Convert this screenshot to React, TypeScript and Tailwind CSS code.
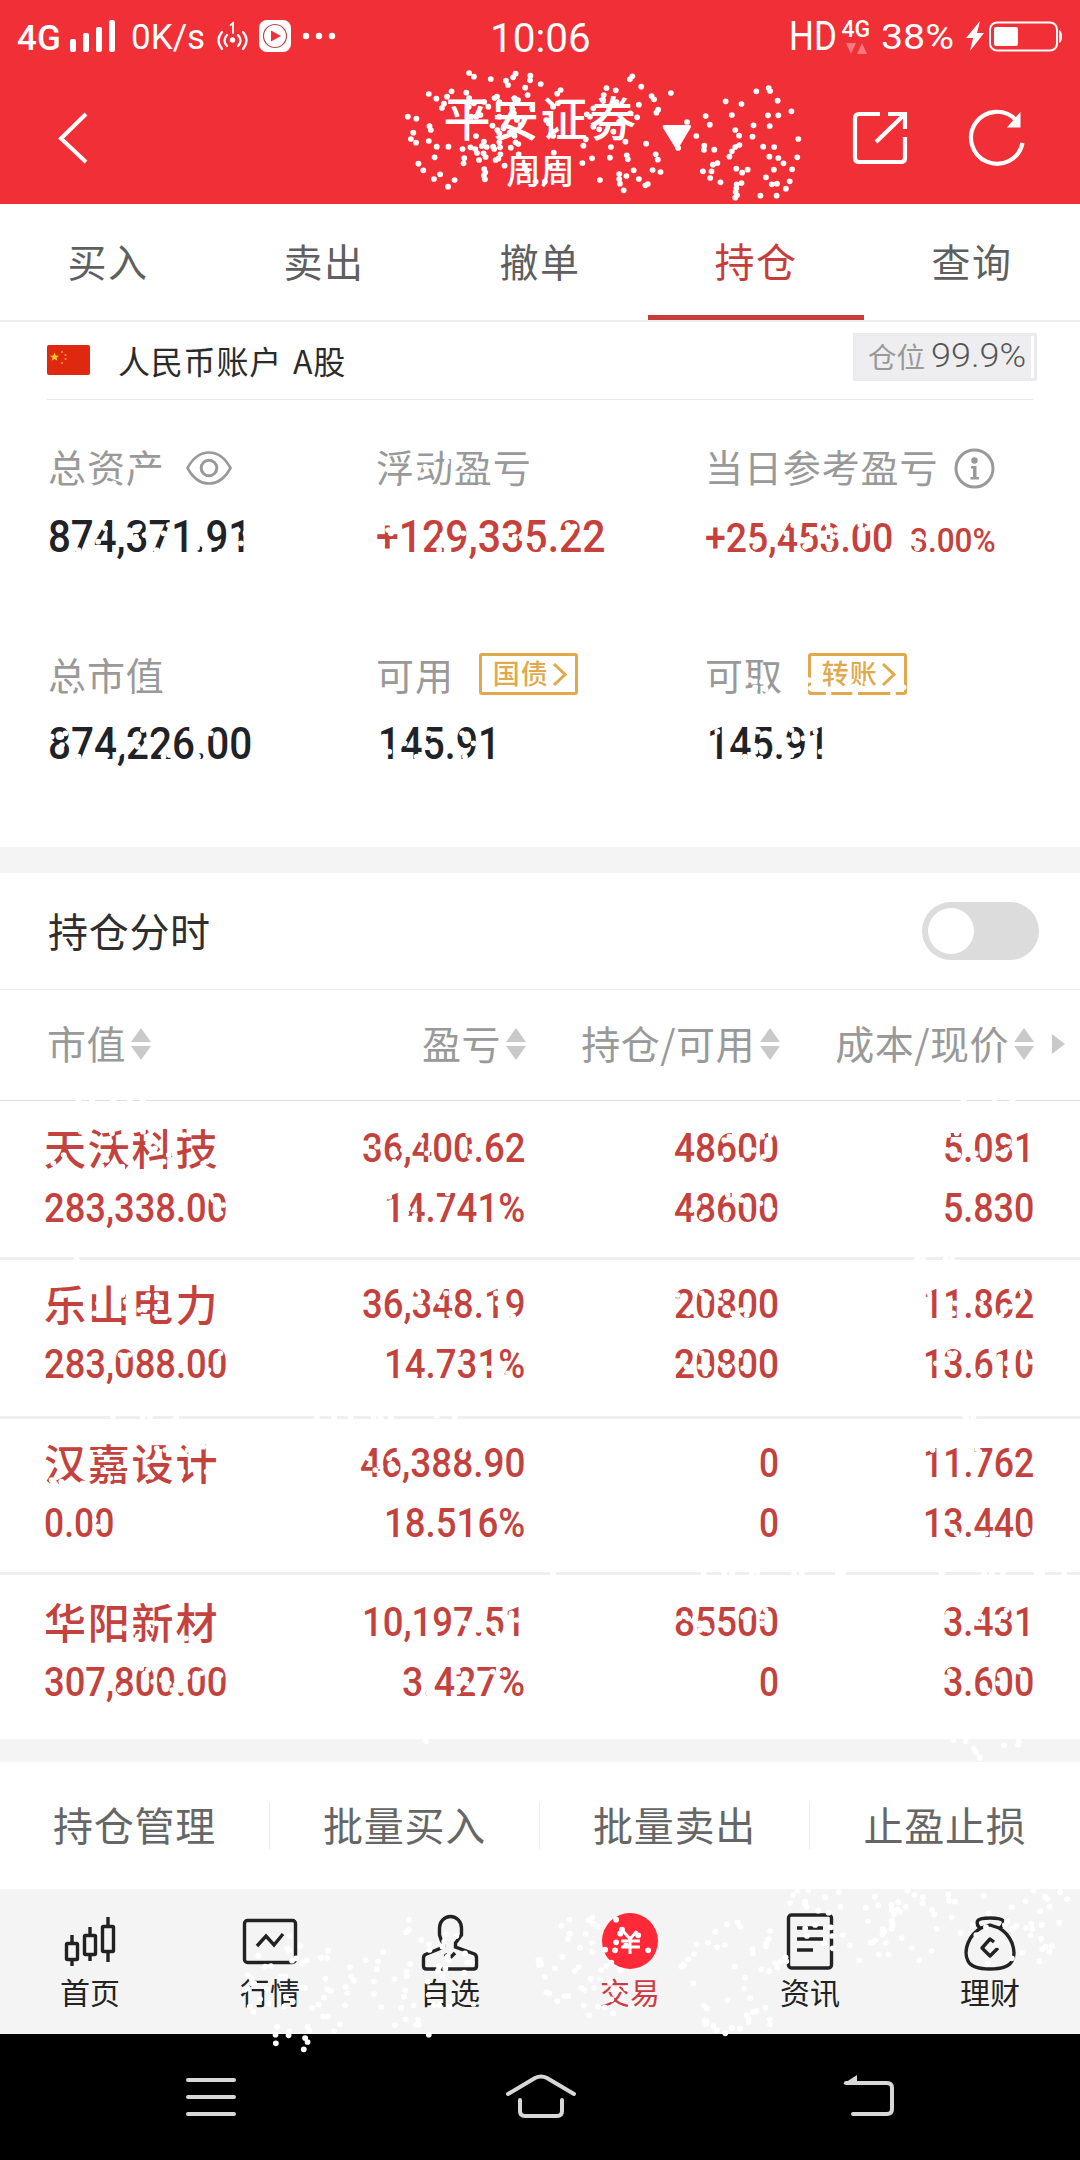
import { useLayoutEffect, useRef, useState } from "react";
import type { ReactNode } from "react";

/* Digits squeezed horizontally to a fixed width, like a condensed DIN face. */
function Fit({ w, className = "", children }: { w: number; className?: string; children: ReactNode }) {
  const ref = useRef<HTMLSpanElement>(null);
  const [scale, setScale] = useState(1);
  useLayoutEffect(() => {
    if (ref.current) setScale(w / ref.current.offsetWidth);
  }, [w]);
  return (
    <span className={`inline-flex shrink-0 whitespace-nowrap font-[Roboto,sans-serif] ${className}`} style={{ width: w }}>
      <span ref={ref} className="origin-left" style={{ transform: `scaleX(${scale})` }}>
        {children}
      </span>
    </span>
  );
}

function StatusBar() {
  return (
    <div className="flex h-[72px] items-center text-white">
      <div className="flex w-[492px] items-center pl-[17px]">
        <Fit w={44} className="mt-[6px] text-[35px] leading-[40px] font-medium">4G</Fit>
        <svg className="ml-[9px] h-[36px] w-[46px]" viewBox="0 0 46 36" fill="#fff">
          <rect x="0" y="21" width="6" height="13" rx="2" />
          <rect x="13" y="15" width="6" height="19" rx="2" />
          <rect x="26" y="9" width="6" height="25" rx="2" />
          <rect x="39" y="2" width="6" height="32" rx="2" />
        </svg>
        <Fit w={74} className="ml-[15px] mt-[3px] text-[35px] leading-[40px]">0K/s</Fit>
        <svg className="ml-[11px] h-[36px] w-[34px]" viewBox="0 0 34 36" fill="none" stroke="#fff" strokeWidth="2.2" strokeLinecap="round">
          <path d="M6 14q-7 8 0 17M11 17q-5 5.500 0 11M27 14q7 8 0 17M22 17q5 5.500 0 11" />
          <path d="M14.500 7l2.500-2v10" strokeWidth="1.800" />
          <circle cx="16.500" cy="22" r="2.700" fill="#fff" stroke="none" />
        </svg>
        <svg className="ml-[9px] h-[32px] w-[32px]" viewBox="0 0 32 32">
          <rect width="32" height="32" rx="8" fill="#fff" />
          <circle cx="16" cy="16" r="11.500" fill="none" stroke="#b84a4c" strokeWidth="1.200" />
          <path d="M12 10.500v11l10-5.500z" fill="#ef3038" />
        </svg>
        <svg className="ml-[11px] h-[8px] w-[34px]" viewBox="0 0 34 8" fill="#fff">
          <circle cx="4" cy="4" r="3.200" />
          <circle cx="17" cy="4" r="3.200" />
          <circle cx="30" cy="4" r="3.200" />
        </svg>
      </div>
      <Fit w={101} className="mt-[5px] -ml-[2px] text-[40px] leading-[44px]">10:06</Fit>
      <Fit w={48} className="ml-[198px] mt-px text-[40px] leading-[44px]">HD</Fit>
      <div className="ml-[4px] mt-px flex w-[30px] flex-col items-center">
        <Fit w={29} className="text-[23px] leading-[22px] font-medium">4G</Fit>
        <svg className="mt-[2px] h-[11px] w-[21px]" viewBox="0 0 21 11" fill="#f9787d">
          <path d="M0 0h10L5 11zM11 11h10L16 0z" />
        </svg>
      </div>
      <Fit w={73} className="ml-[10px] mt-[4px] text-[35px] leading-[40px]">38%</Fit>
      <svg className="ml-[12px] h-[30px] w-[18px]" viewBox="0 0 18 30" fill="#fff">
        <path d="M14 0L0 17h7L4 30 18 12h-7z" />
      </svg>
      <svg className="ml-[5px] h-[31px] w-[74px]" viewBox="0 0 74 31">
        <rect x="1" y="1.500" width="67" height="28" rx="7" fill="none" stroke="#fff" strokeWidth="2" />
        <rect x="5" y="6" width="24" height="19" rx="2" fill="#fff" />
        <path d="M70 9q3 1 3 6.500T70 22z" fill="#fff" />
      </svg>
    </div>
  );
}

function TitleBar() {
  return (
    <div className="flex h-[132px] items-start text-white">
      <svg className="ml-[58px] mt-[40px] h-[52px] w-[30px] shrink-0" viewBox="0 0 30 52" fill="none" stroke="#fff" strokeWidth="4">
        <path d="M28 2L3 26.500L28 50" />
      </svg>
      <div className="ml-[355px] mt-[21px] flex w-[195px] flex-col items-center font-[Roboto,'Noto_Sans_CJK_SC',sans-serif]">
        <div className="whitespace-nowrap text-[47px] leading-[54px] font-medium tracking-[1.5px]">平安证券</div>
        <div className="mt-[3px] whitespace-nowrap text-[34px] leading-[44px] font-medium">周周</div>
      </div>
      <svg className="ml-[24px] mt-[53px] h-[25px] w-[30px]" viewBox="0 0 30 25" fill="#fff">
        <path d="M2 0h25q3 0 1.500 3L16 24q-1 1-2 0L1 3Q0 0 2 0z" />
      </svg>
      <svg className="ml-[160px] mt-[39px] h-[54px] w-[56px]" viewBox="0 0 56 54" fill="none" stroke="#fff" strokeWidth="4.200">
        <path d="M28 3H7q-4 0-4 4v40q0 4 4 4h42q4 0 4-4V26" />
        <path d="M36 3h17v15M53 3L24 31" />
      </svg>
      <svg className="ml-[60px] mt-[35px] h-[60px] w-[58px]" viewBox="0 0 58 60" fill="none" stroke="#fff" strokeWidth="4.200">
        <path d="M54.500 36A26 26 0 1 1 48 13" />
        <path d="M51.500 7.500v12H41z" fill="#fff" strokeWidth="2" />
      </svg>
    </div>
  );
}

const TABS = ["买入", "卖出", "撤单", "持仓", "查询"];

function Tabs() {
  return (
    <div className="grid h-[118px] grid-cols-5 border-b-2 border-[#ececec]">
      {TABS.map((t) => (
        <div
          key={t}
          className={
            t === "持仓"
              ? "border-b-[5px] border-[#c93c3c] pt-[27px] text-center text-[40px] leading-[58px] tracking-[1.500px] text-[#c93c3c]"
              : "pt-[27px] text-center text-[39px] leading-[58px] tracking-[1.500px] text-[#5f5f5f]"
          }
        >
          {t}
        </div>
      ))}
    </div>
  );
}

function AccountRow() {
  return (
    <div className="mx-[47px] flex h-[78px] items-start border-b border-[#e9e9e9]">
      <svg className="mt-[23px] h-[30px] w-[43px]" viewBox="0 0 43 30">
        <rect width="43" height="30" rx="2" fill="#de2910" />
        <path d="M7.500 7.500l1.300 3 3.200.2-2.500 2 .9 3.100-2.900-1.800-2.800 1.800.8-3.100-2.500-2 3.300-.2z" fill="#ffc72c" />
        <g fill="#f39a2b">
          <circle cx="15" cy="7" r="1.100" />
          <circle cx="18.500" cy="10" r="1.100" />
          <circle cx="18.500" cy="14" r="1.100" />
          <circle cx="15" cy="18" r="1.100" />
        </g>
      </svg>
      <div className="ml-[28px] mt-[14px] flex-1 text-[32px] leading-[48px] tracking-[0.800px] text-[#2b2b2b] [word-spacing:3px]">人民币账户 A股</div>
      <div className="-mr-[4px] mt-[11px] flex h-[48px] w-[184px] items-center border-[3px] border-[#ebebee] bg-[#eeeef0] pl-[12px] pb-px">
        <span className="-mt-[2px] text-[28.500px] leading-[40px] text-[#999]">仓位</span>
        <Fit w={95} className="ml-[6px] -mt-px text-[33px] leading-[40px] font-light text-[#555]">99.9%</Fit>
        <span className="ml-auto h-[42px] w-[3px] bg-white" />
      </div>
    </div>
  );
}

function Pill({ children }: { children: ReactNode }) {
  return (
    <span className="ml-[25px] flex h-[42px] w-[99px] items-center rounded-[3px] border-[3px] border-[#e0a94e] pl-[11px] text-[27px] leading-[34px] font-medium text-[#e0a94e]">
      <span className="-mt-[2px]">{children}</span>
      <svg className="ml-[3px] h-[25px] w-[15px]" viewBox="0 0 15 25" fill="none" stroke="#e0a94e" strokeWidth="3">
        <path d="M2 2l11 10.500L2 23" />
      </svg>
    </span>
  );
}

const labelCls = "flex h-[44px] items-center whitespace-nowrap text-[38px] leading-[44px] tracking-[0.900px] text-[#999]";

function Assets() {
  return (
    <div className="grid h-[447px] grid-cols-[328px_329px_1fr] grid-rows-[208px_1fr] pl-[48px] pt-[46px]">
      <div>
        <div className={labelCls}>
          <span className="-mt-[4px]">总资产</span>
          <svg className="ml-[21px] h-[34px] w-[46px]" viewBox="0 0 46 34" fill="none" stroke="#999" strokeWidth="2.600">
            <path d="M1.500 17Q10 1.500 23 1.500T44.500 17Q36 32.500 23 32.500T1.500 17z" />
            <circle cx="23" cy="17" r="7.800" strokeWidth="3" />
          </svg>
        </div>
        <Fit w={203} className="mt-[22px] text-[44px] leading-[50px] font-medium text-[#1f2227]">874,371.91</Fit>
      </div>
      <div>
        <div className={labelCls}><span className="-mt-[4px]">浮动盈亏</span></div>
        <Fit w={230} className="mt-[22px] text-[44px] leading-[50px] font-medium text-[#c6403c]">+129,335.22</Fit>
      </div>
      <div>
        <div className={labelCls}>
          <span className="-mt-[4px]">当日参考盈亏</span>
          <svg className="ml-[16px] h-[41px] w-[41px]" viewBox="0 0 41 41">
            <circle cx="20.500" cy="20.500" r="18.500" fill="none" stroke="#999" strokeWidth="3" />
            <circle cx="20.500" cy="12.500" r="3.200" fill="#999" />
            <path d="M17 18h5.500v11H25v2.500h-8.500V29H19v-8.500h-2z" fill="#999" />
          </svg>
        </div>
        <div className="mt-[24px] flex items-baseline text-[#c6403c]">
          <Fit w={188} className="text-[40px] leading-[50px] font-medium">+25,453.00</Fit>
          <Fit w={86} className="ml-[17px] text-[33px] leading-[40px] font-medium">3.00%</Fit>
        </div>
      </div>
      <div>
        <div className={labelCls}><span className="-mt-[4px]">总市值</span></div>
        <Fit w={204} className="mt-[21px] text-[44px] leading-[50px] font-medium text-[#1f2227]">874,226.00</Fit>
      </div>
      <div>
        <div className={labelCls}><span className="-mt-[4px]">可用</span><span className="-mt-[4px]"><Pill>国债</Pill></span></div>
        <Fit w={122} className="ml-[2px] mt-[21px] text-[44px] leading-[50px] font-medium text-[#1f2227]">145.91</Fit>
      </div>
      <div>
        <div className={labelCls}><span className="-mt-[4px]">可取</span><span className="-mt-[4px]"><Pill>转账</Pill></span></div>
        <Fit w={122} className="ml-[2px] mt-[21px] text-[44px] leading-[50px] font-medium text-[#1f2227]">145.91</Fit>
      </div>
    </div>
  );
}

function SortHead({ children }: { children: ReactNode }) {
  return (
    <div className="flex items-center justify-end whitespace-nowrap">
      <span className="-mt-[4px]">{children}</span>
      <svg className="ml-[5px] h-[32px] w-[20px] shrink-0" viewBox="0 0 20 32" fill="#c9c9c9">
        <path d="M0 14L10 0l10 14zM0 18h20L10 32z" />
      </svg>
    </div>
  );
}

type Cell = [string, number];
type Row = { name: string; value: Cell; cells: [Cell, Cell][]; height: string; top: string };

const ROWS: Row[] = [
  {
    name: "天沃科技", value: ["283,338.00", 183], height: "h-[159px] border-b-[3px]", top: "pt-[17px]",
    cells: [[["36,400.62", 163], ["14.741%", 141]], [["48600", 105], ["48600", 105]], [["5.081", 91], ["5.830", 91]]],
  },
  {
    name: "乐山电力", value: ["283,088.00", 183], height: "h-[159px] border-b-[3px]", top: "pt-[14px]",
    cells: [[["36,348.19", 163], ["14.731%", 141]], [["20800", 105], ["20800", 105]], [["11.862", 111], ["13.610", 111]]],
  },
  {
    name: "汉嘉设计", value: ["0.00", 70], height: "h-[156px] border-b-[3px]", top: "pt-[14px]",
    cells: [[["46,388.90", 165], ["18.516%", 141]], [["0", 20], ["0", 20]], [["11.762", 111], ["13.440", 111]]],
  },
  {
    name: "华阳新材", value: ["307,800.00", 183], height: "h-[164px]", top: "pt-[17px]",
    cells: [[["10,197.51", 163], ["3.427%", 123]], [["85500", 105], ["0", 20]], [["3.431", 91], ["3.600", 91]]],
  },
];

const COLS = "grid grid-cols-[200px_281px_254px_255px_1fr] pl-[44px]";

function Holdings() {
  return (
    <>
      <div className="flex h-[117px] items-center border-b border-[#ececec] pl-[48px] pr-[41px]">
        <span className="flex-1 -mt-[2px] text-[40px] leading-[50px] tracking-[0.700px] text-[#2e2e2e]">持仓分时</span>
        <span className="flex h-[58px] w-[117px] items-center rounded-full bg-[#dcdcdc] pl-[6px]">
          <span className="h-[46px] w-[46px] rounded-full bg-white" />
        </span>
      </div>
      <div className="grid h-[111px] grid-cols-[103px_375px_254px_254px_1fr] items-center border-b border-[#dfdfdf] pb-[3px] pl-[48px] text-[39px] leading-[50px] tracking-[0.500px] text-[#999]">
        <SortHead>市值</SortHead>
        <SortHead>盈亏</SortHead>
        <SortHead>持仓/可用</SortHead>
        <SortHead>成本/现价</SortHead>
        <svg className="ml-[18px] h-[20px] w-[13px]" viewBox="0 0 13 20" fill="#c9c9c9">
          <path d="M0 0l13 10L0 20z" />
        </svg>
      </div>
      {ROWS.map((r) => (
        <div key={r.name} className={`${COLS} ${r.height} border-[#efefef] text-[40.500px] leading-[60px] font-medium text-[#c4423e]`}>
          <div className={`flex flex-col ${r.top}`}>
            <span className="flex h-[60px] items-end whitespace-nowrap text-[42px] leading-[62px] tracking-[1.800px]">{r.name}</span>
            <Fit w={r.value[1]}>{r.value[0]}</Fit>
          </div>
          {r.cells.map(([a, b], i) => (
            <div key={i} className={`flex flex-col items-end ${r.top}`}>
              <Fit w={a[1]}>{a[0]}</Fit>
              <Fit w={b[1]}>{b[0]}</Fit>
            </div>
          ))}
        </div>
      ))}
    </>
  );
}

function Actions() {
  return (
    <div className="flex h-[127px] items-center">
      {["持仓管理", "批量买入", "批量卖出", "止盈止损"].map((t, i) => (
        <div key={t} className={`flex h-[47px] w-[270px] items-center justify-center text-[40px] leading-[47px] tracking-[0.700px] text-[#666] ${i < 3 ? "border-r border-[#ececec]" : ""}`}>
          <span className="-mt-[2px]">{t}</span>
        </div>
      ))}
    </div>
  );
}

const ICONS: { label: string; icon: ReactNode }[] = [
  {
    label: "首页",
    icon: (
      <g strokeWidth="3.400">
        <rect x="6.500" y="30.500" width="11" height="16" rx="1" />
        <rect x="24.500" y="22.500" width="11" height="19" rx="1" />
        <rect x="42.500" y="13.500" width="11" height="25" rx="1" />
        <path d="M12 22v8M12 47v6M30 14v8M30 42v6M48 4v9M48 39v10" />
      </g>
    ),
  },
  {
    label: "行情",
    icon: (
      <g strokeWidth="3.400">
        <rect x="4.500" y="7.500" width="51" height="42" rx="3" />
        <path d="M17 33l9-10 8 9 9-11" />
      </g>
    ),
  },
  {
    label: "自选",
    icon: (
      <g strokeWidth="3.400">
        <path d="M23 28l-2-6v-7a11 11.500 0 0 1 22 0v7l-6 8v4l19 7q2 1 2 4v8q0 3-3 3H8q-3 0-3-3v-8q0-3 3-4l17-7v-4z" transform="translate(-1.500 0)" />
        <path d="M25 41l4 5 6-6" />
      </g>
    ),
  },
  {
    label: "交易",
    icon: (
      <g>
        <circle cx="30" cy="28" r="28" fill="#ff2938" stroke="none" />
        <path d="M23 18l7 8 7-8M21 28h19M21 34h19M30 26v15" stroke="#fff" strokeWidth="3" />
      </g>
    ),
  },
  {
    label: "资讯",
    icon: (
      <g strokeWidth="3.400">
        <rect x="8.500" y="2" width="43" height="53" rx="3" />
        <path d="M17 15h26M17 26h26M17 37h16" />
      </g>
    ),
  },
  {
    label: "理财",
    icon: (
      <g strokeWidth="3.400" strokeLinejoin="round">
        <path d="M21 16q-5-4-3.500-8Q19 5 30 5t13.500 3Q44 12 39 16" />
        <path d="M21 16l9-3 9 3q9 5 13 15 4 11 0 18-4 8-22 8T8 49q-4-8 0-18 4-10 13-15z" transform="translate(0 -1)" />
        <path d="M34 29l-4-3-8 9 8 8 8-8" />
      </g>
    ),
  },
];

function BottomNav() {
  return (
    <div className="grid h-[145px] grid-cols-6 bg-[#f4f4f4]">
      {ICONS.map(({ label, icon }) => (
        <div key={label} className="flex flex-col items-center pt-[24px]">
          <svg className="h-[60px] w-[60px] overflow-visible" viewBox="0 0 60 60" fill="none" stroke="#222">
            {icon}
          </svg>
          <span className={`-mt-px text-[30px] leading-[38px] ${label === "交易" ? "text-[#cc3a42]" : "text-[#222]"}`}>{label}</span>
        </div>
      ))}
    </div>
  );
}

function SystemNav() {
  return (
    <div className="flex h-[126px] items-start bg-black pt-[40px]">
      <svg className="ml-[186px] h-[46px] w-[50px]" viewBox="0 0 50 46" fill="none" stroke="#d8d8d8" strokeWidth="4" strokeLinecap="round">
        <path d="M2 6h46M2 23h46M2 40h46" />
      </svg>
      <svg className="ml-[269px] h-[46px] w-[72px]" viewBox="0 0 72 46" fill="none" stroke="#d8d8d8" strokeWidth="4" strokeLinecap="round">
        <path d="M3 20L30 4q6-3 12 0l27 16M15 26v11q0 5 5 5h32q5 0 5-5V26" />
      </svg>
      <svg className="ml-[265px] h-[46px] w-[54px]" viewBox="0 0 54 46" fill="none" stroke="#d8d8d8" strokeWidth="4" strokeLinecap="round">
        <path d="M4 9h41q5 0 5 5v21q0 5-5 5H11" />
        <path d="M1 10L15 1v9z" fill="#d8d8d8" stroke="none" />
      </svg>
    </div>
  );
}

/* White speckle scattered over the page; each group is in its own grid of units. */
const SPECKS: { at: string; pts: string }[] = [
  {
    at: "translate(0 0) scale(.3444 .3333)",
    pts: "1362,219 1376,230 1425,237 1469,242 1475,255 1490,232 1497,221 1540,227 1539,241 1525,263 1532,285 1311,274 1354,278 1245,282 1267,296 1298,290 1289,311 1283,324 1184,350 1209,356 1247,378 1251,390 1200,398 1193,417 1208,428 1245,423 1268,440 1302,440 1262,472 1215,491 1229,511 1260,537 1278,523 1301,560 1320,540 1343,447 1348,474 1346,490 1366,442 1380,447 1385,459 1405,425 1399,438 1413,441 1404,460 1410,471 1391,480 1382,408 1406,507 1409,517 1405,527 1408,538 1430,377 1432,440 1435,447 1450,427 1452,442 1453,463 1439,480 1447,476 1465,497 1483,443 1497,427 1505,432 1506,463 1524,500 1362,294 1376,310 1406,306 1418,320 1361,320 1368,350 1383,350 1395,345 1436,294 1443,290 1450,306 1494,294 1504,300 1487,324 1492,340 1501,360 1450,350 1444,390 1450,400 1462,385 1480,398 1494,408 1512,375 1545,325 1530,512 1555,545",
  },
  {
    at: "translate(540 0) scale(.3444 .3333)",
    pts: "2,252 268,229 261,238 294,260 193,264 220,271 60,270 50,281 185,285 183,300 324,288 331,298 380,279 287,314 343,329 338,338 222,306 200,320 155,325 136,343 145,350 155,380 172,388 213,395 282,352 262,340 230,365 38,320 52,310 25,370 35,395 38,408 18,360 133,418 126,437 206,441 248,425 308,431 203,473 151,475 123,489 252,466 255,478 336,463 342,479 272,511 327,510 350,516 174,540 230,522 230,537 232,551 251,528 243,571 287,537 306,556 313,552 40,458 28,500 14,545 427,366 454,408 481,348 493,374 539,304 585,312 557,345 628,274 664,264 668,273 690,302 662,346 692,346 730,334 620,376 667,378 567,390 578,407 617,410 750,417 477,437 476,450 506,449 579,435 567,441 557,454 550,470 648,440 680,441 666,470 692,474 747,472 707,490 502,494 515,489 473,514 498,514 494,534 524,547 570,506 587,518 603,509 679,509 732,508 656,532 725,544 585,549 571,553 570,565 568,576 572,586 567,593 673,553 688,551 714,566 640,587 687,587 401,444",
  },
  {
    at: "translate(0 200) scale(.3444 .3333)",
    pts: "263,858 330,850 385,800 1145,855 1235,800 1225,825 1265,860 1260,775 1297,785 1325,820 1355,830 1340,790 1395,860 215,990 228,1050 285,1025 305,985 375,990 405,980 395,1010 420,1005 300,1045 475,1000 490,975 455,1050 572,1043 595,1050 628,1000 640,1055 690,990 700,1030 713,1000 1127,990 1135,1000 1110,1030 1262,980 1285,1005 1275,1050 1345,1000 1370,1025 1495,1010 1515,1015 1555,1040",
  },
  {
    at: "translate(540 200) scale(.3444 .3333)",
    pts: "80,975 100,980 10,1050 655,975 650,990 625,1040 715,1000 735,975 750,985 770,1040 760,1020 790,1000 800,1055 835,975 825,1010 850,1010 860,990 875,1020 840,1045 930,975 950,985 1085,1030 1095,1045 1107,1010 1010,1055",
  },
  {
    at: "translate(0 600) scale(.3444 .3333)",
    pts: "375,270 415,255 205,278 1225,225 1245,262 1275,280 150,410 178,410 190,400 180,435 228,470 310,465 345,460 395,410 415,390 400,440 425,420 455,410 475,470 492,465 540,400 535,455 575,470 612,400 1115,410 1130,455 1175,430 1210,470 1245,400 1235,430 1275,410 1342,400 1375,430 1350,470",
  },
  {
    at: "translate(540 600) scale(.3444 .3333)",
    pts: "610,240 625,262 645,245 655,268 780,240 787,265 838,282 915,280 1025,282 1055,262 910,260 950,250 515,395 560,400 575,435 595,470 632,395 655,400 625,455 640,475 680,460 695,455 730,390 720,420 765,415 750,450 730,465 800,395 815,455",
  },
  {
    at: "translate(0 980) scale(.3444 .3333)",
    pts: "228,361 268,361 328,361 377,361 415,361 235,455 185,525 155,550 275,470 325,460 320,485 295,560 310,540 355,560 360,455 415,455 435,465 430,490 450,505 475,545 490,525 535,465 600,545 590,550 1095,500 1150,520 1145,545 1170,510 1240,520 1250,500 1225,480 1360,465 1370,500 1365,530 612,650 620,660 648,675 640,700 1130,650 1185,685 1205,705 1180,700 1300,640 222,838 175,940 190,945 285,970 275,1000 355,945 365,965 360,1000 405,990 420,990 430,945 455,945 465,970 450,1000 495,1005 350,1125 375,1125 390,1040 640,1120 605,1170 1215,935 1220,965 1275,965 1295,940 1305,1000 1350,955 1345,990 1375,1000 1440,940 1445,970 1500,965 1480,1000 1490,1010 1260,1125 1330,1120 1320,1155 1405,1150 1420,1165 1470,1150 1475,1180 1205,1185",
  },
  {
    at: "translate(540 980) scale(.3444 .3333)",
    pts: "1230,361 1320,361 1372,361 535,480 550,470 525,535 570,490 585,540 620,510 645,470 650,530 670,465 440,690 460,670 470,710 545,645 540,715 585,660 605,670 605,710 640,670 675,690 1185,465 1210,460 1215,525 1265,520 1270,540 1330,520 1355,510 1360,485 1095,838 1113,838 1178,838 1196,838 400,945 430,1000 470,940 490,955 480,1000 520,945 545,945 525,970 540,990 560,1000 585,990 600,1005 1130,940 1190,960 1205,970 1200,1000 1235,985 1280,970 1340,1005 1365,980 1400,935 425,1160 470,1120 485,1125 465,1160 490,1165 480,1180 530,1155 550,1160 580,1125 590,1165 1150,1150 1190,1120 1205,1120 1280,1175 1335,1130 1355,1150 1360,1180 1405,1115 1425,1145 1235,1312 1258,1312",
  },
  {
    at: "translate(0 1400) scale(.3444 .3333)",
    pts: "328,48 415,50 435,50 512,50 920,50 970,54 1018,54 1085,50 1105,54 1135,54 1268,48 1320,50 150,240 178,245 240,250 290,155 310,175 300,210 320,235 345,200 360,165 405,165 430,185 425,215 440,230 480,150 455,145 530,215 545,150 590,140 600,215 285,380 275,360 1070,175 1090,210 1105,200 1130,175 1150,205 1350,150 1310,200 362,685 400,710 430,680 455,670 540,715 410,805 430,810 445,845 470,840 490,850 500,870 510,855 525,870 545,830 585,820 640,825 348,870 1350,670 1390,690 1445,700 1485,640 1500,660 1200,870 1240,860 1245,880 1330,815 1340,845 1355,850 1330,875 1380,870 1395,850 1430,815 1450,820 1237,1024",
  },
  {
    at: "translate(540 1400) scale(.3444 .3333)",
    pts: "38,520 475,520 535,518 558,522 615,520 632,516 738,522 760,520 865,522 880,522 1167,518 1290,518 1312,520 1345,522 1442,520 1458,522 1522,518 1238,52 1258,52 1140,150 1275,155 1270,148 1210,400 1240,385 1295,400 1415,390 405,655 430,655 465,670 465,690 490,690 545,685 590,650 610,640 645,650 655,630 645,670 1185,640 1280,650 1270,670 1330,660 1355,630 1350,650 1340,680 1190,815 1335,825 1330,850 1390,815 1300,870 1200,1020 1236,1024 1260,1047 1267,1058 1277,1073 1347,1036 1388,1034 1390,1022",
  },
  {
    at: "translate(0 1760) scale(.3444 .3333)",
    pts: "842,528 834,565 840,572 873,558 750,587 770,620 787,618 848,602 860,595 876,611 890,601 932,593 950,594 953,572 720,645 730,655 738,670 720,685 710,690 775,688 815,650 828,650 877,684 885,684 945,656 950,687 961,693 1004,681 1009,699 1016,622 1019,650 1028,662 1002,736 941,713 925,734 907,743 938,769 952,769 987,792 970,813 893,800 898,812 755,717 780,730 725,740 736,756 830,710 850,725 825,740 1062,601 1098,604 1112,576 1094,628 1086,664 1086,702 1107,741 1145,657 1180,634 1181,648 1191,612 1187,479 1187,509 1179,517 1223,540 1245,553 1247,570 1295,522 1290,545 1285,560 1325,528 1300,590 1303,600 1350,580 1348,638 1357,607 1370,608 1275,620 1272,632 1293,626 1285,650 1242,665 1177,691 1173,710 1201,736 1165,743 1245,705 1260,735 1275,735 1305,740 1375,732 1178,778 1214,778 1208,794 1216,794 1147,796 804,800 841,813 838,826 800,824 801,850 886,834 893,846 882,868 1245,824 1563,600 1565,615",
  },
  {
    at: "translate(540 1760) scale(.3444 .3333)",
    pts: "86,479 62,497 87,521 81,538 133,522 116,563 141,480 152,473 154,491 168,500 151,549 152,575 0,600 4,613 65,590 44,625 112,622 101,633 14,650 18,697 27,699 50,724 70,708 82,708 127,737 142,766 168,740 188,742 212,760 221,479 238,509 233,521 285,526 221,547 250,556 189,569 218,571 314,571 207,608 193,618 178,630 234,631 147,656 175,657 120,683 129,690 158,684 203,668 213,687 225,690 250,685 207,718 265,737 543,493 509,515 574,488 582,501 536,555 514,562 488,548 455,553 447,582 430,598 418,614 411,620 565,619 617,568 618,580 663,538 657,550 656,559 668,513 683,610 698,606 665,634 643,628 690,623 713,592 715,604 445,670 595,653 593,685 610,714 544,721 476,737 484,745 477,780 484,784 482,792 503,798 513,810 538,820 557,804 581,806 600,766 618,757 606,777 606,786 629,753 655,743 667,778 668,793 726,430 735,405 748,392 770,424 769,432 775,441 779,392 828,412 868,396 872,440 946,443 972,410 982,436 952,483 966,548 974,541 960,548 928,601 900,556 880,525 848,528 845,502 825,550 850,565 838,458 808,452 770,505 775,528 799,495 984,583 1012,583 1004,549 994,523 995,507 1000,515 1021,506 1024,493 1021,480 1028,463 1045,455 1038,448 1040,426 1021,434 1021,450 1062,440 1067,392 1087,405 1112,412 1111,430 1050,534 1080,564 1101,601 1137,573 1138,450 1145,463 1152,506 1195,473 1186,404 1187,422 1205,425 1221,518 1256,495 1267,525 1288,407 1303,460 1295,502 1350,495 1356,483 1370,441 1373,506 1383,497 1400,578 1411,504 1410,424 1427,491 1429,507 1425,526 1433,392 1467,410 1473,417 1480,440 1452,454 1457,494 1455,536 1468,560 1458,568 1479,575 1486,558 1450,604 1508,488 1511,396 1531,417 1370,595 1300,610 1325,555",
  },
];

function Specks() {
  return (
    <svg className="pointer-events-none absolute inset-0 h-[2160px] w-[1080px]" viewBox="0 0 1080 2160" stroke="#fff" strokeWidth="17" strokeLinecap="round">
      {SPECKS.map(({ at, pts }) => (
        <path key={at} transform={at} d={pts.split(" ").map((p) => `M${p}h0.010`).join("")} />
      ))}
    </svg>
  );
}

export default function App() {
  return (
    <div className="relative h-[2160px] w-[1080px] overflow-hidden bg-white font-['Noto_Sans_CJK_SC',sans-serif]">
      <header className="bg-[#f12f37]">
        <StatusBar />
        <TitleBar />
      </header>
      <Tabs />
      <AccountRow />
      <Assets />
      <div className="h-[26px] bg-[#f4f4f4]" />
      <Holdings />
      <div className="h-[23px] bg-[#f4f4f4]" />
      <Actions />
      <BottomNav />
      <SystemNav />
      <Specks />
    </div>
  );
}
